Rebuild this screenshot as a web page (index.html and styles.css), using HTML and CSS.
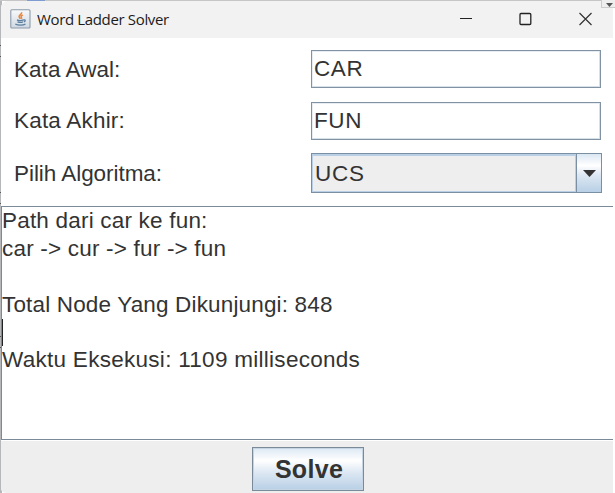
FILE: index.html
```html
<!DOCTYPE html>
<html lang="id">
<head>
<meta charset="utf-8">
<title>Word Ladder Solver</title>
<link rel="stylesheet" href="styles.css">
</head>
<body>
<div class="backdrop"><i class="tab"></i><i class="mark m1"></i><i class="mark m2"></i><i class="mark m3"></i></div>
<main class="window">
  <header class="titlebar">
    <svg class="java" width="21" height="20" viewBox="0 0 21 20">
      <defs><linearGradient id="g" x1="0" y1="0" x2="0" y2="1"><stop offset="0" stop-color="#f8f9fa"/><stop offset="1" stop-color="#cfd9e3"/></linearGradient></defs>
      <rect x=".8" y=".8" width="19.2" height="18.2" rx="1" fill="url(#g)" stroke="#8b9aaa" stroke-width="1.1"/>
      <path d="M11.6 3.2c.6 2-2.9 2.700-2.500 4.500.1.900 1 1.300 1.100 2.200M12.700 6c-1.600.8-2 1.500-1.300 2.400.4.500.2 1-.2 1.400" fill="none" stroke="#e8853c" stroke-width="1.500"/>
      <path d="M7 10.900c1.500.8 5 .7 6.700 0M7.500 12.900c1.700.7 4 .6 5.500 0M13.600 11c2-.6 2.200 1.300.2 2M5.300 15c2.500 1.600 8 1.500 10.200 0" fill="none" stroke="#5d7f9f" stroke-width="1.300"/>
    </svg>
    <span class="title">Word Ladder Solver</span>
    <span class="controls">
      <svg width="12" height="14" viewBox="0 0 12 14"><path d="M0 6.500h12" stroke="#222" stroke-width="1.100"/></svg>
      <svg width="13" height="14" viewBox="0 0 13 14"><rect x="1" y="1.500" width="10.800" height="11" rx="1" fill="none" stroke="#222" stroke-width="1.300"/></svg>
      <svg width="13" height="14" viewBox="0 0 13 14"><path d="M.5 1l12 12M12.500 1l-12 12" stroke="#333" stroke-width="1.200"/></svg>
    </span>
  </header>
  <section class="form">
    <label class="l1">Kata Awal:</label><div class="field">CAR</div>
    <label class="l2">Kata Akhir:</label><div class="field">FUN</div>
    <label class="l3">Pilih Algoritma:</label>
    <div class="combo"><span class="value">UCS</span><span class="arrow"><svg width="13" height="7" viewBox="0 0 13 7"><path d="M0 0h13L6.500 7z" fill="#333"/></svg></span></div>
  </section>
  <section class="output">
    <p class="o1">Path dari car ke fun:</p>
    <p class="o2">car -&gt; cur -&gt; fur -&gt; fun</p>
    <p></p>
    <p class="o3">Total Node Yang Dikunjungi: 848</p>
    <p class="caret"></p>
    <p class="o4">Waktu Eksekusi: 1109 milliseconds</p>
  </section>
  <footer class="actions"><button class="solve">Solve</button></footer>
</main>
<span class="corner"><svg width="7" height="4" viewBox="0 0 7 4"><path d="M0 0h7L3.500 4z" fill="#555"/></svg></span>
</body>
</html>
```
FILE: styles.css
```css
* { box-sizing: border-box; }
body {
  margin: 0;
  width: 615px;
  height: 493px;
  overflow: hidden;
  position: relative;
  background: linear-gradient(90deg, #b5b7ba 0 2px, #fff 2px);
  font: 22.5px "Liberation Sans", Arial, sans-serif;
  color: #333;
}
.backdrop { position: absolute; inset: 0; border-top: 1px solid #c6c6c6; }
.tab { position: absolute; left: 27px; top: -1px; width: 18px; height: 1px; background: #7f9cd0; }
.mark { position: absolute; left: 0; width: 1px; height: 12px; border: solid #555; border-width: 1px 0; }
.m1 { top: 44px; }
.m2 { top: 191px; }
.m3 { top: 335px; }
.window {
  position: relative;
  display: flex;
  flex-direction: column;
  width: 612px;
  height: 492px;
  margin: 1px 0 0 1px;
  background: #fff;
  border-radius: 7px 0 0 5px;
  overflow: hidden;
}
.titlebar {
  display: flex;
  align-items: center;
  height: 37px;
  padding: 0 20px 0 9px;
  background: #f2f2f2;
  flex: none;
}
.java { margin-top: -1px; }
.title {
  margin: -2px auto 0 6px;
  font: 15px "Open Sans", sans-serif;
  letter-spacing: -0.35px;
  color: #1c1c1c;
}
.controls { display: flex; gap: 47px; margin: -1px 1px 0 0; }
.form {
  display: grid;
  grid-template-columns: 297px 291px;
  grid-template-rows: 38px 38px 40px;
  row-gap: 13.5px;
  padding: 12px 0 0 13px;
  height: 168px;
  flex: none;
  align-items: center;
}
.form label { padding-top: 1px; }
.l1 { letter-spacing: 0.05px; }
.l2 { letter-spacing: 0.2px; }
.l3 { letter-spacing: -0.05px; }
.field {
  width: 290px;
  height: 38px;
  padding-left: 2px;
  border: 1px solid #8193a3;
  box-shadow: inset -1px -1px #d6e0e8, inset 1px 1px #e7edf2;
  line-height: 36px;
  letter-spacing: 0.6px;
}
.combo {
  display: flex;
  height: 40px;
  border: 1px solid #7b8fa3;
}
.value {
  flex: 1;
  padding-left: 2px;
  background: #eee;
  border: 1px solid #b8cfe5;
  border-top-width: 2px;
  line-height: 35px;
  letter-spacing: 0.8px;
}
.arrow {
  display: grid;
  place-items: center;
  width: 25px;
  border-left: 1px solid #7b8fa3;
  background: linear-gradient(#dbe7f2, #fff 30%, #dde8f3 55%, #b8cfe5);
}
.output {
  height: 234px;
  flex: none;
  border: solid #7a8a99;
  border-width: 1px 0 1px 1px;
  line-height: 27.9px;
  white-space: nowrap;
}
.output p { margin: 0; height: 27.9px; }
.o1 { letter-spacing: 0.2px; }
.o2 { letter-spacing: 0.2px; }
.o3 { letter-spacing: 0.16px; }
.o4 { letter-spacing: 0.28px; }
.output .caret { border-left: 1px solid #222; }
.actions {
  flex: 1;
  display: flex;
  justify-content: center;
  align-items: flex-start;
  padding: 7px 0 0 2px;
  background: #eee;
  border-top: 1px solid #fff;
  padding-top: 6px;
}
.solve {
  width: 112px;
  height: 44px;
  padding: 1px 0 0 2px;
  border: 1px solid #7a8a99;
  box-shadow: inset 0 0 0 1px #c5d5e4;
  background: linear-gradient(#dce8f3, #fff 30%, #dde8f3 58%, #b8cfe5);
  font: bold 25px "Liberation Sans", Arial, sans-serif;
  letter-spacing: .3px;
  color: #333;
}
.corner {
  position: absolute;
  right: 0;
  top: 0;
  width: 14px;
  height: 8px;
  padding-left: 4px;
  background: #eee;
  border: solid #ccc;
  border-width: 0 0 1px 1px;
  line-height: 0;
}
```
